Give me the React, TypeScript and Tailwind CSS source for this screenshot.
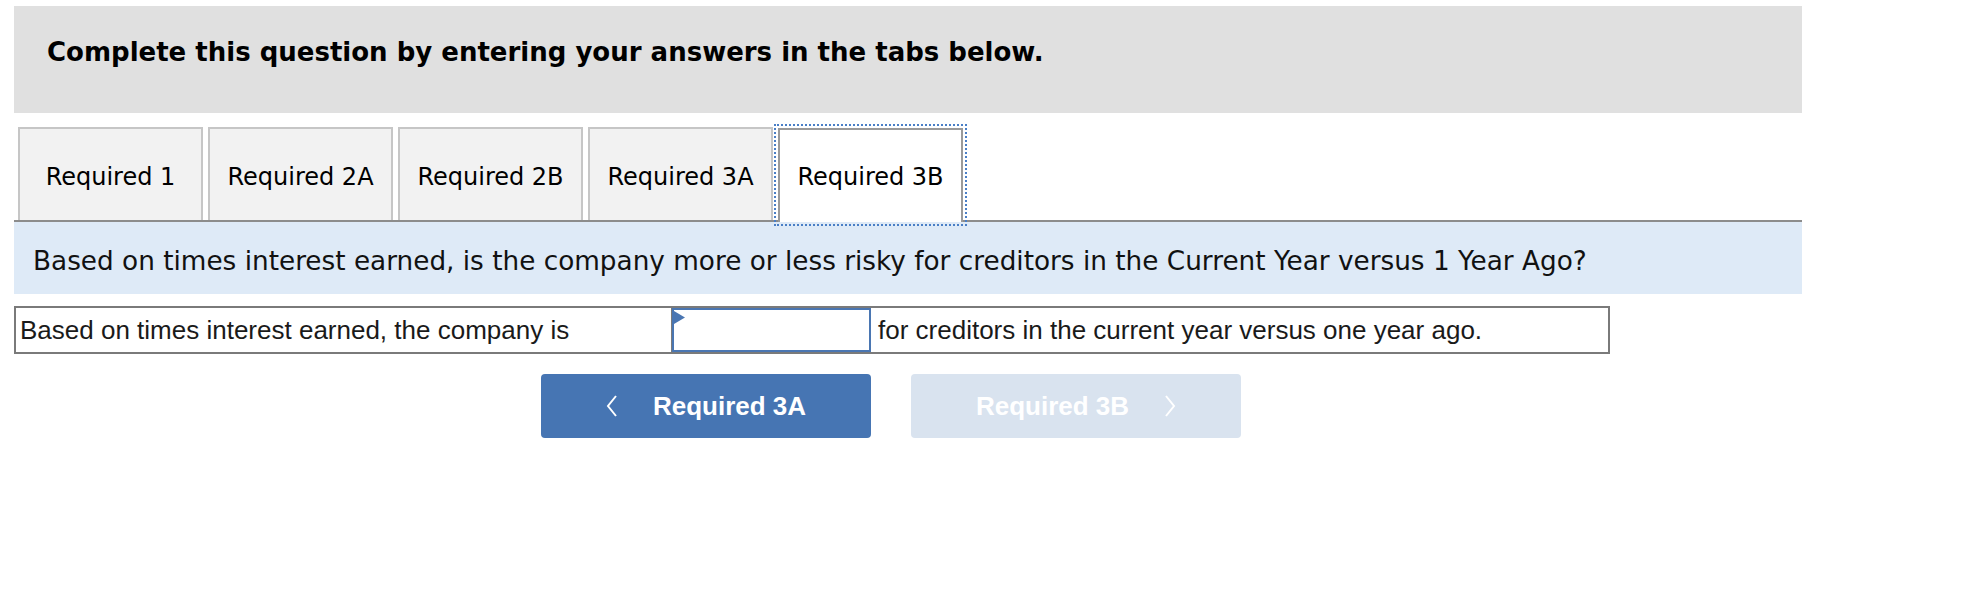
import React from "react";

const tabs = ["Required 1", "Required 2A", "Required 2B", "Required 3A", "Required 3B"];

const Chevron = ({ dir }: { dir: "left" | "right" }) => (
  <svg width="12" height="22" viewBox="0 0 12 22" fill="none" className="shrink-0">
    <polyline
      points={dir === "left" ? "10,1 2,11 10,21" : "2,1 10,11 2,21"}
      stroke="white"
      strokeWidth="2"
      strokeLinejoin="miter"
    />
  </svg>
);

const App = () => {
  const active = 4;

  return (
    <div className="w-[1964px] h-[592px] bg-white pt-[6px] pl-[14px]">
      <div className="w-[1788px]">
        {/* instructions banner */}
        <div className="h-[107px] bg-[#e0e0e0] pl-[33px] pt-[31px]">
          <h1 className="font-['DejaVu_Sans',sans-serif] font-bold text-[26px] leading-[30px] text-black">
            Complete this question by entering your answers in the tabs below.
          </h1>
        </div>

        {/* tab strip */}
        <div className="mt-[14px] flex items-end gap-[5px] pl-[4px] border-b-2 border-[#8c8c8c]">
          {tabs.map((t, i) =>
            i === active ? (
              <div
                key={t}
                className="relative -mb-[2px] h-[94px] w-[185px] flex items-center justify-center pt-[2px] bg-white border-2 border-b-0 border-[#9a9a9a] outline-2 outline-dotted outline-offset-2 outline-[#4a7fc6] font-['DejaVu_Sans',sans-serif] text-[24px] text-black"
              >
                {t}
              </div>
            ) : (
              <div
                key={t}
                className="h-[93px] w-[185px] flex items-center justify-center pt-[4px] bg-[#f2f2f2] border-2 border-b-0 border-[#c6c6c6] font-['DejaVu_Sans',sans-serif] text-[24px] text-black"
              >
                {t}
              </div>
            )
          )}
        </div>

        {/* question */}
        <div className="h-[72px] bg-[#deeaf7] pl-[19px] pt-[6px] flex items-center">
          <p className="font-['DejaVu_Sans',sans-serif] text-[26.3px] leading-[30px] text-[#111]">
            Based on times interest earned, is the company more or less risky for creditors in the Current Year versus 1 Year Ago?
          </p>
        </div>

        {/* answer row */}
        <div className="mt-[12px] w-[1596px] h-[48px] flex border-2 border-[#7a7a7a] font-['Liberation_Sans',Arial,sans-serif] text-[26px] text-[#1a1a1a]">
          <div className="w-[655px] flex items-center pl-[4px]">
            Based on times interest earned, the company is
          </div>
          <div className="w-[200px] h-full border-l border-[#7a7a7a]">
            <div className="relative h-full border-2 border-[#4a76b2] bg-white">
              <svg width="11" height="13" viewBox="0 0 11 13" className="absolute left-0 top-[1px]">
                <polygon points="0,0 11,6.5 0,13" fill="#4a76b2" />
              </svg>
            </div>
          </div>
          <div className="flex-1 flex items-center pl-[7px]">
            for creditors in the current year versus one year ago.
          </div>
        </div>

        {/* nav buttons */}
        <div className="mt-[20px] ml-[527px] flex gap-[40px] font-['Liberation_Sans',Arial,sans-serif] font-bold text-[26px] text-white">
          <button className="w-[330px] h-[64px] rounded-[4px] bg-[#4675b3] flex items-center justify-center gap-[35px]">
            <Chevron dir="left" />
            <span>Required 3A</span>
          </button>
          <button className="w-[330px] h-[64px] rounded-[4px] bg-[#d9e3ef] flex items-center justify-center gap-[35px]">
            <span>Required 3B</span>
            <Chevron dir="right" />
          </button>
        </div>
      </div>
    </div>
  );
};

export default App;
